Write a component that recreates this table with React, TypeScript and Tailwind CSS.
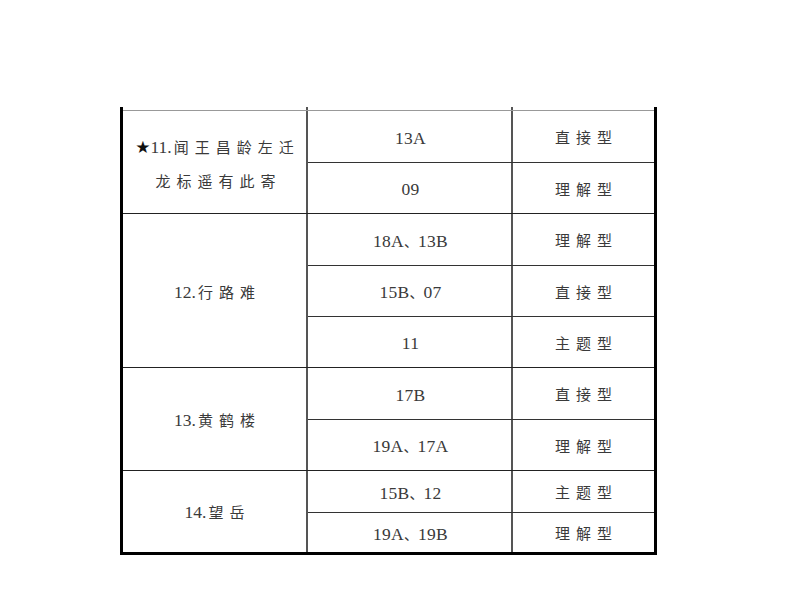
import React from "react";

const latin = "font-['Liberation_Serif','Noto_Sans_CJK_SC',serif]";

function Cn({ children, ls = "tracking-[6px]" }: { children: React.ReactNode; ls?: string }) {
  return (
    <span className={`font-['Noto_Sans_CJK_SC',sans-serif] text-[15px] ${ls}`}>{children}</span>
  );
}

function Code({ text }: { text: string }) {
  const parts = text.split("、");
  return (
    <span className={`${latin} text-[17.5px] tracking-[0.3px]`}>
      {parts.map((p, i) => (
        <React.Fragment key={i}>
          {i > 0 && (
            <span className="font-['Noto_Sans_CJK_SC',sans-serif] text-[14px] tracking-normal">
              、
            </span>
          )}
          {p}
        </React.Fragment>
      ))}
    </span>
  );
}

type Sub = { code: string; type: string; h: string };
type Group = { label: React.ReactNode; subs: Sub[]; topGray?: boolean };

const groups: Group[] = [
  {
    topGray: true,
    label: (
      <div className="flex flex-col items-center leading-[33px] pt-[3px]">
        <div className="pl-[4px] whitespace-nowrap">
          <span className="font-['DejaVu_Sans',sans-serif] text-[17px] text-[#111]">★</span>
          <span className={`${latin} text-[17.5px] mr-[2px]`}>11.</span>
          <Cn>闻王昌龄左迁</Cn>
        </div>
        <div className="pl-[6px]">
          <Cn>龙标遥有此寄</Cn>
        </div>
      </div>
    ),
    subs: [
      { code: "13A", type: "直接型", h: "h-[52px]" },
      { code: "09", type: "理解型", h: "h-[51px]" },
    ],
  },
  {
    label: (
      <div className="pl-[4px] pt-[3px]">
        <span className={`${latin} text-[17.5px] mr-[2px]`}>12.</span>
        <Cn>行路难</Cn>
      </div>
    ),
    subs: [
      { code: "18A、13B", type: "理解型", h: "h-[52px]" },
      { code: "15B、07", type: "直接型", h: "h-[51px]" },
      { code: "11", type: "主题型", h: "h-[51px]" },
    ],
  },
  {
    label: (
      <div className="pl-[4px] pt-[3px]">
        <span className={`${latin} text-[17.5px] mr-[2px]`}>13.</span>
        <Cn>黄鹤楼</Cn>
      </div>
    ),
    subs: [
      { code: "17B", type: "直接型", h: "h-[52px]" },
      { code: "19A、17A", type: "理解型", h: "h-[51px]" },
    ],
  },
  {
    label: (
      <div className="pl-[4px] pt-[2px]">
        <span className={`${latin} text-[17.5px] mr-[2px]`}>14.</span>
        <Cn>望岳</Cn>
      </div>
    ),
    subs: [
      { code: "15B、12", type: "主题型", h: "h-[42px]" },
      { code: "19A、19B", type: "理解型", h: "h-[40px]" },
    ],
  },
];

export default function App() {
  return (
    <div className="w-[794px] h-[596px] bg-white text-[#3a3a3a] overflow-hidden">
      <div className="ml-[120px] mt-[107px] w-[537px] border-l-[3px] border-r-[3px] border-b-[3px] border-black">
        <div className="flex h-[3px]">
          <div className="w-[185px] border-r-2 border-[#555]" />
          <div className="w-[205px] border-r-2 border-[#555]" />
        </div>
        {groups.map((g, gi) => {
          const tb = g.topGray ? "border-[#999]" : "border-[#222]";
          return (
            <div key={gi} className="flex">
              <div
                className={`w-[185px] border-t ${tb} flex items-center justify-center relative`}
              >
                {g.label}
                <div className="absolute right-0 top-0 bottom-0 w-[2px] bg-[#555]" />
              </div>
              <div className="flex-1 flex flex-col">
                {g.subs.map((s, si) => {
                  const b = si === 0 ? tb : "border-[#333]";
                  return (
                    <div key={si} className={`flex ${s.h} border-t ${b}`}>
                      <div className="w-[205px] flex items-center justify-center pt-[3px] relative">
                        <Code text={s.code} />
                        <div className="absolute right-0 top-0 bottom-0 w-[2px] bg-[#555]" />
                      </div>
                      <div className="flex-1 flex items-center justify-center pt-[2px] pl-[6px]">
                        <Cn>{s.type}</Cn>
                      </div>
                    </div>
                  );
                })}
              </div>
            </div>
          );
        })}
      </div>
    </div>
  );
}
